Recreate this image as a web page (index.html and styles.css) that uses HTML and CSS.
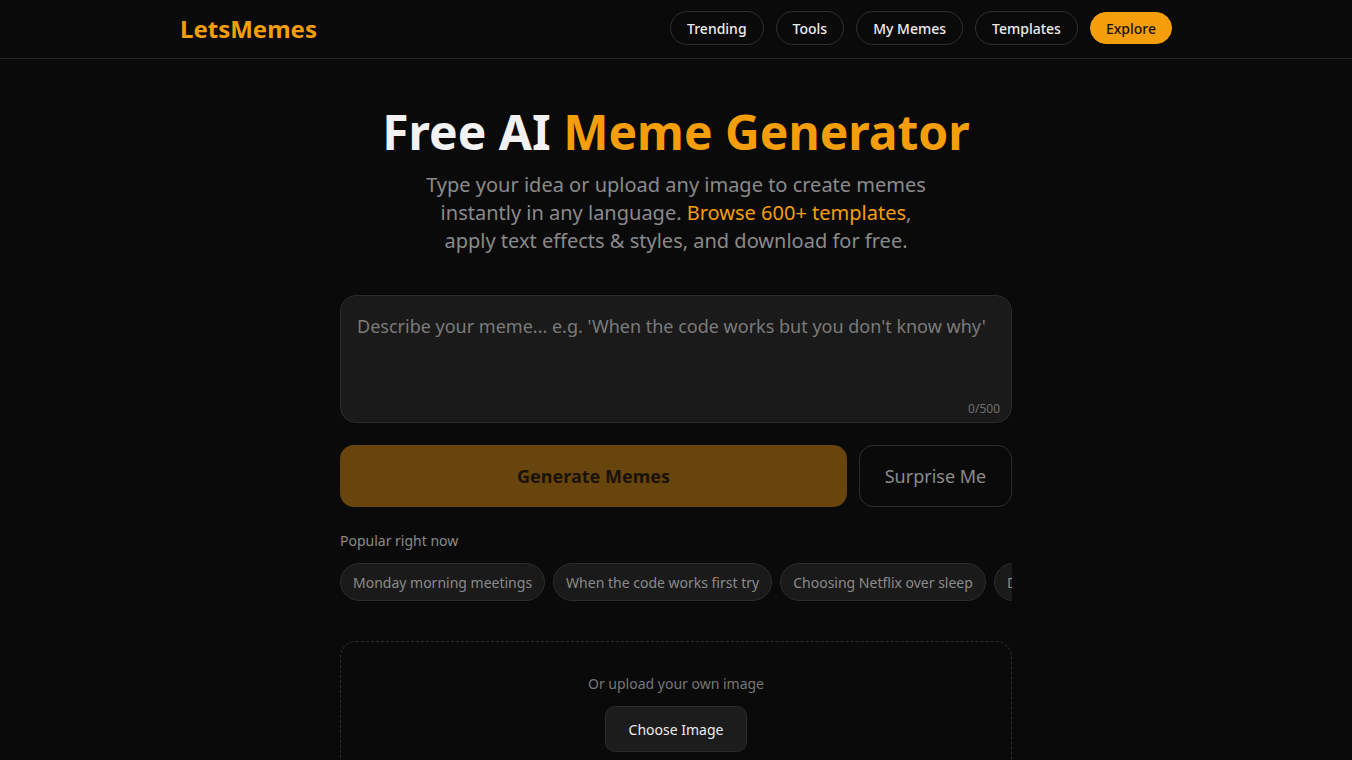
FILE: index.html
```html
<!DOCTYPE html>
<html lang="en">
<head>
  <meta charset="UTF-8" />
  <meta name="viewport" content="width=device-width, initial-scale=1" />
  <title>LetsMemes - Free AI Meme Generator</title>
  <link rel="stylesheet" href="styles.css">
</head>
<body>

  <!-- Top navigation -->
  <header class="topbar">
    <div class="topbar-inner">
      <a class="logo" href="#">LetsMemes</a>
      <nav class="nav">
        <a class="nav-pill" href="#">Trending</a>
        <a class="nav-pill" href="#">Tools</a>
        <a class="nav-pill" href="#">My Memes</a>
        <a class="nav-pill" href="#">Templates</a>
        <a class="nav-pill nav-pill-accent" href="#">Explore</a>
      </nav>
    </div>
  </header>

  <main class="main">
    <section class="hero">
      <h1 class="hero-title">Free AI <span class="accent">Meme Generator</span></h1>
      <p class="hero-sub">
        Type your idea or upload any image to create memes<br>
        instantly in any language. <a class="accent" href="#">Browse 600+ templates</a>,<br>
        apply text effects &amp; styles, and download for free.
      </p>
    </section>

    <!-- Prompt box -->
    <div class="prompt">
      <textarea class="prompt-input" placeholder="Describe your meme... e.g. 'When the code works but you don't know why'"></textarea>
      <span class="prompt-count">0/500</span>
    </div>

    <div class="actions">
      <button class="btn-generate" disabled>Generate Memes</button>
      <button class="btn-surprise">Surprise Me</button>
    </div>

    <div class="popular">
      <p class="popular-label">Popular right now</p>
      <div class="chips">
        <button class="chip">Monday morning meetings</button>
        <button class="chip">When the code works first try</button>
        <button class="chip">Choosing Netflix over sleep</button>
        <button class="chip">Debugging at 3am</button>
      </div>
    </div>

    <!-- Upload area -->
    <div class="upload">
      <p class="upload-label">Or upload your own image</p>
      <button class="btn-choose">Choose Image</button>
    </div>
  </main>

</body>
</html>
```

FILE: styles.css
```css
* {
  box-sizing: border-box;
}

body {
  margin: 0;
  font-family: "Noto Sans", "Open Sans", sans-serif;
  background: #0a0a0a;
  color: #ededed;
}

a {
  text-decoration: none;
}

button {
  font-family: inherit;
}

.accent {
  color: #f59e0b;
}

/* header */
.topbar {
  border-bottom: 1px solid #262626;
}

.topbar-inner {
  width: 992px;
  height: 58px;
  margin: 0 auto;
  display: flex;
  align-items: center;
  justify-content: space-between;
}

.logo {
  color: #f59e0b;
  font-size: 24px;
  font-weight: 700;
  margin-top: -2px;
}

.nav {
  display: flex;
  gap: 12px;
  margin-top: -2px;
}

.nav-pill {
  height: 34px;
  padding: 0 16px;
  display: flex;
  align-items: center;
  border: 1px solid #2e2e2e;
  border-radius: 999px;
  color: #ededed;
  font-size: 14px;
  font-weight: 500;
}

.nav-pill-accent {
  background: #f59e0b;
  border-color: #f59e0b;
  color: #1a1104;
  height: 32px;
  margin-top: 1px;
  padding: 0 15px;
}

/* main column */
.main {
  width: 672px;
  margin: 0 auto;
  padding-top: 42px;
}

.hero {
  text-align: center;
}

.hero-title {
  margin: 0;
  font-size: 48px;
  line-height: 62px;
  font-weight: 700;
  color: #f2f2f2;
}

.hero-sub {
  margin: 8px 0 0;
  font-size: 20px;
  line-height: 28px;
  color: #8a8a8a;
}

.prompt {
  position: relative;
  margin-top: 40px;
}

.prompt-input {
  display: block;
  width: 100%;
  height: 128px;
  padding: 16px 16px;
  background: #1a1a1a;
  border: 1px solid #2c2c2c;
  border-radius: 16px;
  color: #ededed;
  font-family: inherit;
  font-size: 18px;
  line-height: 28px;
  resize: none;
  outline: none;
}

.prompt-input::placeholder {
  color: #7a7a7a;
}

.prompt-count {
  position: absolute;
  right: 12px;
  bottom: 6px;
  font-size: 12px;
  color: #6e6e6e;
}

.actions {
  display: flex;
  gap: 12px;
  margin-top: 22px;
}

.btn-generate {
  flex: 1;
  height: 62px;
  border: none;
  border-radius: 14px;
  background: #67450c;
  color: #1a1207;
  font-size: 18px;
  font-weight: 700;
}

.btn-surprise {
  width: 153px;
  height: 62px;
  background: transparent;
  border: 1px solid #2c2c2c;
  border-radius: 14px;
  color: #8a8a8a;
  font-size: 18px;
}

.popular {
  margin-top: 24px;
}

.popular-label {
  margin: 0;
  font-size: 14px;
  line-height: 20px;
  color: #8a8a8a;
}

.chips {
  display: flex;
  gap: 8px;
  margin-top: 12px;
  overflow: hidden;
}

.chip {
  flex: none;
  height: 38px;
  padding: 0 12px;
  background: #1a1a1a;
  border: 1px solid #2c2c2c;
  border-radius: 999px;
  color: #8a8a8a;
  font-size: 14px;
}

.upload {
  margin-top: 40px;
  border: 1px dashed #2e2e2e;
  border-radius: 16px;
  padding: 32px 0 40px;
  text-align: center;
}

.upload-label {
  margin: 0;
  font-size: 14px;
  line-height: 20px;
  color: #777;
}

.btn-choose {
  margin-top: 12px;
  height: 46px;
  padding: 0 23px;
  background: #1c1c1c;
  border: 1px solid #2c2c2c;
  border-radius: 10px;
  color: #ededed;
  font-size: 14px;
}
```
